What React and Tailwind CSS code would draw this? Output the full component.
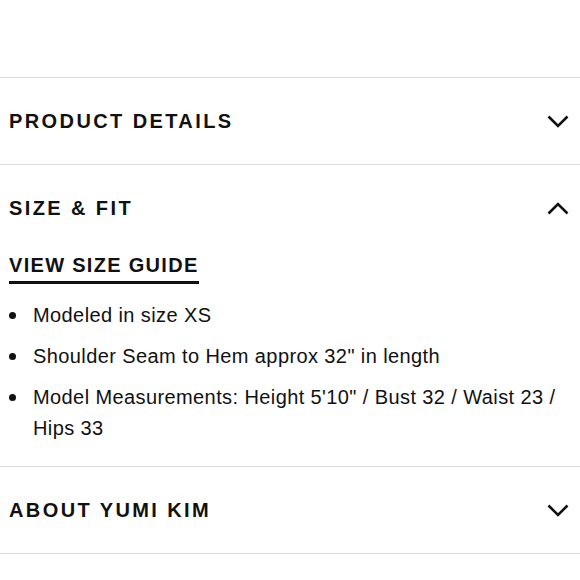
import { useState } from "react";

const sections = [
  { id: "details", title: "PRODUCT DETAILS" },
  { id: "fit", title: "SIZE & FIT" },
  { id: "about", title: "ABOUT YUMI KIM" },
];

const fitNotes = [
  "Modeled in size XS",
  'Shoulder Seam to Hem approx 32" in length',
  'Model Measurements: Height 5\'10" / Bust 32 / Waist 23 / Hips 33',
];

function Chevron({ up }) {
  return (
    <svg width="22" height="13" viewBox="0 0 22 13" className="shrink-0">
      <polyline
        points={up ? "1.5,11.5 11,2 20.5,11.5" : "1.5,1.5 11,11 20.5,1.5"}
        fill="none"
        stroke="#111"
        strokeWidth="2.6"
      />
    </svg>
  );
}

function FitContent() {
  return (
    <div className="pl-[9px] pr-[10px] pb-[22px]">
      <a
        href="#"
        className="inline-block mt-[3px] font-bold text-[20px] leading-[23px] tracking-[1.3px] text-[#111] border-b-[3px] border-[#111] pb-[4px]"
      >
        VIEW SIZE GUIDE
      </a>
      <ul className="mt-[16px] flex flex-col gap-[10px]">
        {fitNotes.map((note) => (
          <li key={note} className="flex items-start text-[20px] leading-[31px] tracking-[0.4px] text-[#111]">
            <span className="w-[24px] shrink-0 flex pt-[12px]">
              <span className="block w-[7px] h-[7px] rounded-full bg-[#111]"></span>
            </span>
            <span>{note}</span>
          </li>
        ))}
      </ul>
    </div>
  );
}

export default function App() {
  const [open, setOpen] = useState("fit");

  return (
    <div className="bg-white w-[580px] h-[580px] overflow-hidden pt-[77px]" style={{ fontFamily: '"Liberation Sans", Arial, sans-serif' }}>
      {sections.map((s) => (
        <section key={s.id} className="border-t border-[#dcdcdc] last:border-b">
          <button
            onClick={() => setOpen(open === s.id ? null : s.id)}
            className="w-full h-[86px] flex items-center justify-between pl-[9px] pr-[11px] text-left"
          >
            <span className="font-bold text-[20px] tracking-[2.4px] text-[#111]">{s.title}</span>
            <Chevron up={open === s.id} />
          </button>
          {open === s.id && s.id === "fit" && <FitContent />}
        </section>
      ))}
    </div>
  );
}
